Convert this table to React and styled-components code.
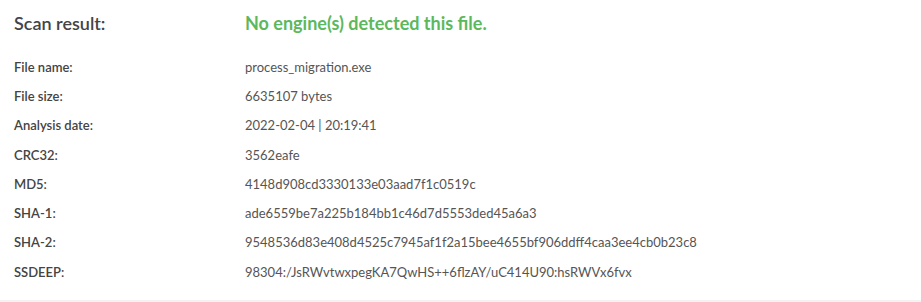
import styled, { createGlobalStyle } from "styled-components";

const GlobalStyle = createGlobalStyle`
    body {
        margin: 0;
        background: #ffffff;
        font-family: Lato, "Open Sans", sans-serif;
    }
`

const Panel = styled.div`
    width: 921px;
    height: 302px;
    box-sizing: border-box;
    padding: 10px 14px 0;
    border-bottom: 2px solid #f3f3f3;
`

const Header = styled.div`
    display: grid;
    grid-template-columns: 231px 1fr;
    align-items: center;
    height: 26px;
    margin-bottom: 16px;
`

const Title = styled.h2`
    margin: 0;
    font-size: 18px;
    font-weight: 600;
    color: #444444;
`

const Verdict = styled.span`
    font-size: 18px;
    font-weight: 700;
    color: ${(p) => (p.clean ? "#5cb85c" : "#d9534f")};
`

const Row = styled.div`
    display: grid;
    grid-template-columns: 231px 1fr;
    align-items: center;
    height: 29.3px;
`

const Label = styled.span`
    font-size: 13px;
    font-weight: 600;
    color: #444444;
`

const Value = styled.span`
    font-size: 13px;
    color: #555555;
`

const details = [
    ["File name:", "process_migration.exe"],
    ["File size:", "6635107 bytes"],
    ["Analysis date:", "2022-02-04 | 20:19:41"],
    ["CRC32:", "3562eafe"],
    ["MD5:", "4148d908cd3330133e03aad7f1c0519c"],
    ["SHA-1:", "ade6559be7a225b184bb1c46d7d5553ded45a6a3"],
    ["SHA-2:", "9548536d83e408d4525c7945af1f2a15bee4655bf906ddff4caa3ee4cb0b23c8"],
    ["SSDEEP:", "98304:/JsRWvtwxpegKA7QwHS++6flzAY/uC414U90:hsRWVx6fvx"],
];

const App = () => {
    return (
        <>
            <GlobalStyle />
            <Panel>
                <Header>
                    <Title>Scan result:</Title>
                    <Verdict clean>No engine(s) detected this file.</Verdict>
                </Header>
                {details.map(([label, value]) => (
                    <Row key={label}>
                        <Label>{label}</Label>
                        <Value>{value}</Value>
                    </Row>
                ))}
            </Panel>
        </>
    );
};

export default App;
